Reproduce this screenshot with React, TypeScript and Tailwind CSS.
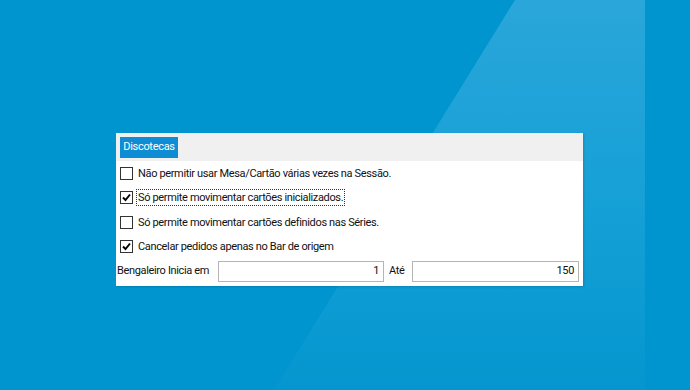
import React from 'react';

const options = [
  { label: 'Não permitir usar Mesa/Cartão várias vezes na Sessão.', checked: false, focus: false },
  { label: 'Só permite movimentar cartões inicializados.', checked: true, focus: true },
  { label: 'Só permite movimentar cartões definidos nas Séries.', checked: false, focus: false },
  { label: 'Cancelar pedidos apenas no Bar de origem', checked: true, focus: false },
];

const CheckBox = ({ checked }: { checked: boolean }) => (
  <span className="w-[13px] h-[13px] border border-[#333333] bg-white flex items-center justify-center shrink-0">
    {checked && (
      <svg width="9" height="9" viewBox="0 0 9 9">
        <path d="M1 4.5 L3.5 7 L8 1.5" fill="none" stroke="#000" strokeWidth="1.9" />
      </svg>
    )}
  </span>
);

export default function App() {
  return (
    <div
      className="relative w-[690px] h-[390px] overflow-hidden bg-[#0095cf]"
      style={{ fontFamily: 'Roboto, "Noto Sans", sans-serif' }}
    >
      <svg className="absolute inset-0" width="690" height="390" viewBox="0 0 690 390">
        <defs>
          <linearGradient id="shine" x1="0" y1="0" x2="0" y2="1">
            <stop offset="0" stopColor="#2aa6da" />
            <stop offset="0.55" stopColor="#14a0d6" />
            <stop offset="1" stopColor="#0596cf" />
          </linearGradient>
        </defs>
        <polygon points="515,0 645,0 645,390 274,390" fill="url(#shine)" />
      </svg>

      <div className="relative pt-[133px] pl-[116px]">
        <div className="w-[467px] h-[153px] bg-white flex flex-col shadow-[1px_1px_2px_rgba(0,0,0,0.15)]">
          <div className="h-[28px] bg-[#f0f0f0] pl-[4px] pt-[4px]">
            <div className="w-[58px] h-[21px] bg-[#0e8dd4] text-white text-[11px] tracking-[-0.3px] flex items-center justify-center">
              Discotecas
            </div>
          </div>

          <div className="flex flex-col text-[11px] tracking-[-0.35px] text-[#111111]">
            {options.map((o) => (
              <div key={o.label} className="h-[24.5px] flex items-center pl-[4px] gap-[3px]">
                <CheckBox checked={o.checked} />
                <span
                  className={
                    o.focus
                      ? 'border border-dotted border-[#333] px-[1px] leading-[15px]'
                      : 'border border-transparent px-[1px] leading-[15px]'
                  }
                >
                  {o.label}
                </span>
              </div>
            ))}

            <div className="flex items-center h-[21px] mt-[2px] pl-[1px]">
              <span className="w-[101px] whitespace-nowrap">Bengaleiro Inicia em</span>
              <div className="w-[166px] h-[21px] border border-[#b5b5b5] flex items-center justify-end pr-[4px]">
                1
              </div>
              <span className="w-[28px] pl-[5px]">Até</span>
              <div className="w-[167px] h-[21px] border border-[#b5b5b5] flex items-center justify-end pr-[4px]">
                150
              </div>
            </div>
          </div>
        </div>
      </div>
    </div>
  );
}
